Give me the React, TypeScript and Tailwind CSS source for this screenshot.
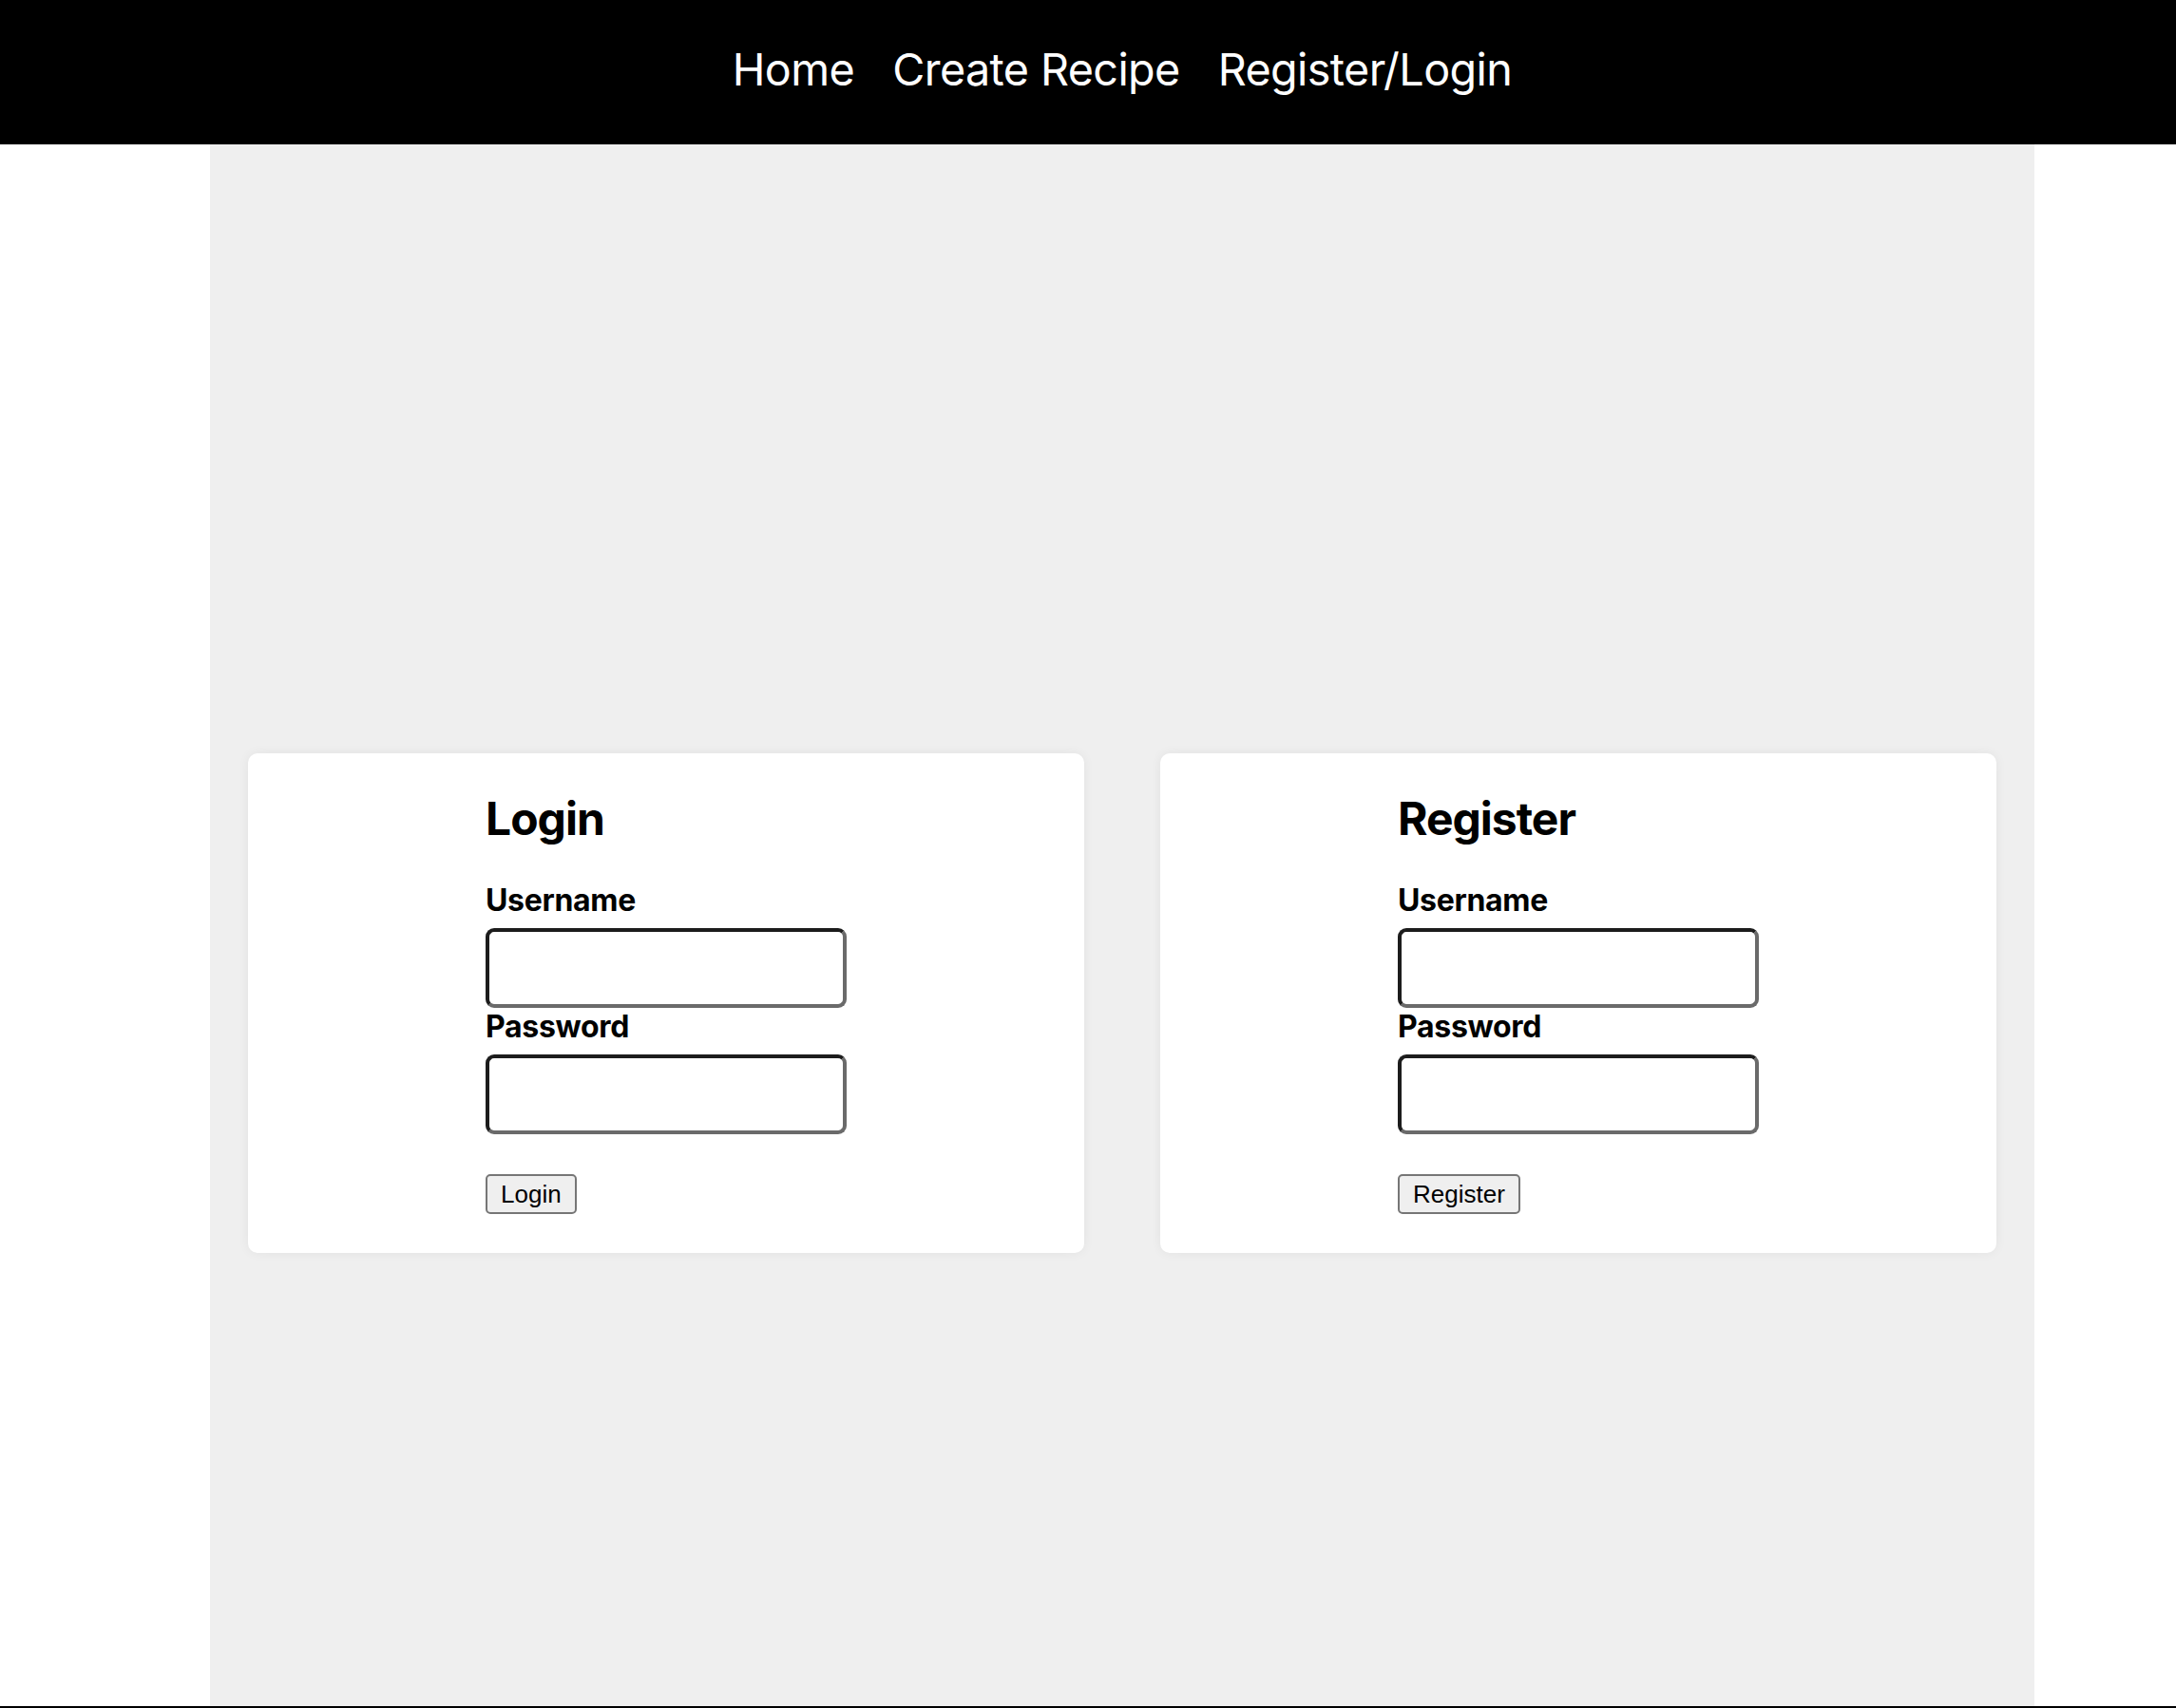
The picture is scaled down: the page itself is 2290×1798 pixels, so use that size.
import { useState } from 'react'

const NAV_LINKS = ['Home', 'Create Recipe', 'Register/Login']

interface AuthFormProps {
  title: string
  action: string
}

function AuthForm({ title, action }: AuthFormProps) {
  const [username, setUsername] = useState('')
  const [password, setPassword] = useState('')

  return (
    <div className="w-[880px] bg-white rounded-[10px] shadow-[0_0_12px_rgba(0,0,0,0.06)] pt-10 pb-[41px] flex justify-center">
      <form className="w-[380px] flex flex-col items-start" onSubmit={e => e.preventDefault()}>
        <h2 className="text-[48px] leading-[58px] font-bold tracking-[-1px] text-black">{title}</h2>

        <label className="mt-[37px] text-[32px] leading-[39px] font-bold tracking-[-0.3px] text-black">Username</label>
        <input
          value={username}
          onChange={e => setUsername(e.target.value)}
          className="mt-[10px] w-[380px] h-[84px] bg-white rounded-[9px] border-[4px] border-t-[#1c1c1c] border-l-[#1c1c1c] border-b-[#6a6a6a] border-r-[#6a6a6a] outline-none px-2 text-[26px]"
        />

        <label className="text-[32px] leading-[39px] font-bold tracking-[-0.3px] text-black">Password</label>
        <input
          type="password"
          value={password}
          onChange={e => setPassword(e.target.value)}
          className="mt-[10px] w-[380px] h-[84px] bg-white rounded-[9px] border-[4px] border-t-[#1c1c1c] border-l-[#1c1c1c] border-b-[#6a6a6a] border-r-[#6a6a6a] outline-none px-2 text-[26px]"
        />

        <button
          type="submit"
          className="mt-[42px] h-[42px] px-[14px] bg-[#efefef] border-2 border-[#767676] rounded-[5px] text-[26px] leading-none text-black font-['Liberation_Sans',Arial,sans-serif]"
        >
          {action}
        </button>
      </form>
    </div>
  )
}

export default function App() {
  return (
    <div className="min-h-screen bg-white font-['Inter','Helvetica_Neue',Arial,sans-serif] flex flex-col">

      {/* NAV */}
      <nav className="h-[152px] bg-black flex items-center justify-center pl-[72px] pb-[5px]">
        <ul className="flex items-center gap-10">
          {NAV_LINKS.map(link => (
            <li key={link}>
              <a href="#" className="text-white text-[46.7px] leading-none tracking-[-0.6px]">{link}</a>
            </li>
          ))}
        </ul>
      </nav>

      {/* MAIN */}
      <main className="w-[1920px] ml-[221px] h-[1644px] bg-[#efefef] flex items-start justify-center gap-20 pt-[641px]">
        <AuthForm title="Login" action="Login" />
        <AuthForm title="Register" action="Register" />
      </main>

      <div className="h-[4px] bg-black" />
    </div>
  )
}
